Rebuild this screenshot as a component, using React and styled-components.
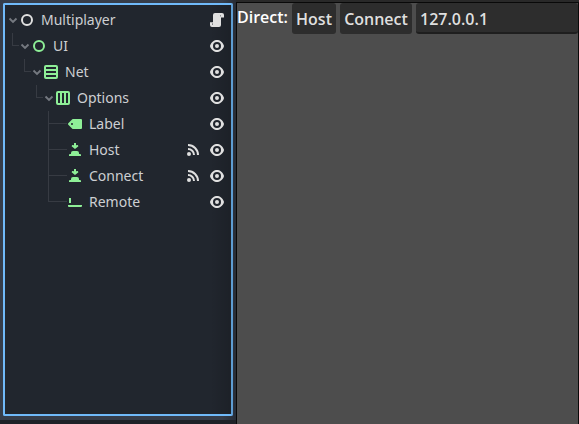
import React from 'react';
import styled, { createGlobalStyle } from 'styled-components';

const GlobalStyle = createGlobalStyle`
  * { box-sizing: border-box; }
  body { margin: 0; overflow: hidden; background: #363d4a; }
`;

const Window = styled.div`
  display: flex;
  width: 579px;
  height: 424px;
  overflow: hidden;
`;

const Dock = styled.aside`
  display: flex;
  flex: none;
  flex-direction: column;
  width: 236px;
  height: 424px;
  padding: 3px 3px 0;
  background: linear-gradient(to right, transparent 222px, rgba(0, 0, 0, 0.28)), #363d4a;
`;

const Tree = styled.div`
  flex: none;
  height: 413px;
  padding: 2px;
  border: 2px solid #70bafa;
  border-right-color: #5e9dd3;
  border-radius: 2px;
  background: linear-gradient(to right, transparent 205px, rgba(0, 0, 0, 0.14)), #21262e;
`;

const DockFooter = styled.div`
  flex: none;
  height: 4px;
  margin: 4px -3px 0;
  background: #1e2127;
`;

const TreeRow = styled.div`
  display: flex;
  align-items: center;
  height: 26px;
  padding-left: ${({ $indent }) => $indent}px;
  padding-right: 4px;
`;

const Branch = styled.div`
  display: grid;
  grid-template-rows: 13px 13px;
  flex: none;
  width: ${({ $wide }) => ($wide ? 19 : 7)}px;
  height: 26px;
  &::before {
    content: '';
    border-left: 1px solid #373b43;
    border-bottom: 1px solid #373b43;
  }
  &::after {
    content: '';
    border-left: 1px solid ${({ $more }) => ($more ? '#373b43' : 'transparent')};
  }
`;

const Arrow = styled.svg`
  flex: none;
  width: 12px;
  height: 12px;
  fill: none;
  stroke: #757980;
  stroke-width: 1.9;
`;

const Icon = styled.svg`
  flex: none;
  width: 16px;
  height: 16px;
  fill: ${({ $color }) => $color || '#e0e0e0'};
`;

const NodeName = styled.span`
  flex: 1;
  margin-left: 6px;
  font: 14px/26px 'Noto Sans', sans-serif;
  color: #cdcfd2;
`;

const RowActions = styled.div`
  display: flex;
  gap: 8px;
`;

const Viewport = styled.main`
  display: grid;
  grid-template-columns: minmax(0, 1fr);
  grid-template-rows: 2px 1px 1fr;
  flex: 1;
  min-width: 0;
  background: #090909;
`;

const ViewportEdge = styled.div`
  background: #292929;
`;

const Canvas = styled.div`
  grid-row: 3;
  margin: 0 1px;
  background: #4d4d4d;
`;

const ControlRow = styled.div`
  display: flex;
  gap: 4px;
  height: 31px;
  font: 600 16px/31px 'Open Sans', sans-serif;
`;

const Caption = styled.span`
  flex: none;
  width: 51px;
  line-height: 29px;
  color: #fff;
  white-space: nowrap;
`;

const Button = styled.button`
  flex: none;
  width: ${({ $width }) => $width}px;
  padding: 2px 0 0;
  border: 0;
  border-radius: 3px;
  background: #2d2d2d;
  color: #dfdfdf;
  font: inherit;
  line-height: 29px;
`;

const AddressInput = styled.input`
  flex: 1;
  min-width: 0;
  height: 31px;
  padding: 2px 4px 0;
  border: 0;
  border-bottom: 2px solid #1e1e1e;
  border-radius: 3px;
  outline: 0;
  background: #2d2d2d;
  color: #dfdfdf;
  font: inherit;
  line-height: 27px;
`;

const shapes = {
  node: 'M8 2a6 6 0 1 0 0 12A6 6 0 0 0 8 2zm0 2a4 4 0 1 1 0 8 4 4 0 0 1 0-8z',
  vbox: 'M3 1a2 2 0 0 0-2 2v10a2 2 0 0 0 2 2h10a2 2 0 0 0 2-2V3a2 2 0 0 0-2-2zm0 2h10v2H3zm0 4h10v2H3zm0 4h10v2H3z',
  hbox: 'M3 1a2 2 0 0 0-2 2v10a2 2 0 0 0 2 2h10a2 2 0 0 0 2-2V3a2 2 0 0 0-2-2zm0 2h2v10H3zm4 0h2v10H7zm4 0h2v10h-2z',
  label: 'M6 3a1 1 0 0 0-.707.293l-4 4a1 1 0 0 0 0 1.414l4 4A1 1 0 0 0 6 13h8a1 1 0 0 0 1-1V4a1 1 0 0 0-1-1zM5 7a1 1 0 0 1 0 2 1 1 0 0 1 0-2z',
  button: 'M7 1v2.2L5.2 2.9 4.6 4.2 8 7l3.4-2.8-.6-1.3L9 3.2V1zM6 9a2 2 0 0 0-2 2v1H3a1 1 0 0 0-1 1v1h12v-1a1 1 0 0 0-1-1h-1v-1a2 2 0 0 0-2-2z',
  lineEdit: 'M2 4v5h2V4zM1 11v1a1 1 0 0 0 1 1h12a1 1 0 0 0 1-1v-1z',
  eye: 'M8 2C5.443 2 2.209 3.948 1.045 7.705a1 1 0 0 0-.01.557C2.163 12.212 5.503 14 8 14s5.837-1.788 6.965-5.738a1 1 0 0 0 0-.55C13.829 3.935 10.557 2 8 2zm0 2a4 4 0 1 1 0 8 4 4 0 0 1 0-8zm0 2a2 2 0 1 0 0 4 2 2 0 0 0 0-4z',
  signal: 'M3 2v2a9 9 0 0 1 9 9h2A11 11 0 0 0 3 2zm0 4v2a5 5 0 0 1 5 5h2a7 7 0 0 0-7-7zm1 4a2 2 0 1 0 0 4 2 2 0 0 0 0-4z',
  script: 'M6 1a2 2 0 0 0-2 2v7.3H1V13a2 2 0 0 0 2 2h7a2 2 0 0 0 2-2V5.5h3V3a2 2 0 0 0-2-2zM3.5 11.3H4V13a.4.4 0 0 1-.5 0zM11.6 4.5V3a.3.3 0 0 1 .4 0v1.5z',
};

const nodes = [
  { name: 'Multiplayer', icon: 'node', indent: 0, open: true, root: true },
  { name: 'UI', icon: 'node', indent: 5, open: true },
  { name: 'Net', icon: 'vbox', indent: 17, open: true },
  { name: 'Options', icon: 'hbox', indent: 29, open: true },
  { name: 'Label', icon: 'label', indent: 41, more: true },
  { name: 'Host', icon: 'button', indent: 41, more: true, signal: true },
  { name: 'Connect', icon: 'button', indent: 41, more: true, signal: true },
  { name: 'Remote', icon: 'lineEdit', indent: 41 },
];

function Glyph({ name, color }) {
  return (
    <Icon viewBox="0 0 16 16" $color={color}>
      <path fillRule="evenodd" d={shapes[name]} />
    </Icon>
  );
}

function TreeNode({ node }) {
  return (
    <TreeRow $indent={node.indent}>
      {!node.root && <Branch $wide={!node.open} $more={node.more} />}
      {node.open && (
        <Arrow viewBox="0 0 12 12">
          <path d="M2.5 4.5 6 8l3.5-3.5" />
        </Arrow>
      )}
      <Glyph name={node.icon} color={node.root ? undefined : '#8eef97'} />
      <NodeName>{node.name}</NodeName>
      <RowActions>
        {node.signal && <Glyph name="signal" />}
        <Glyph name={node.root ? 'script' : 'eye'} />
      </RowActions>
    </TreeRow>
  );
}

export default function App() {
  return (
    <Window>
      <GlobalStyle />
      <Dock>
        <Tree>
          {nodes.map((node) => (
            <TreeNode key={node.name} node={node} />
          ))}
        </Tree>
        <DockFooter />
      </Dock>
      <Viewport>
        <ViewportEdge />
        <Canvas>
          <ControlRow>
            <Caption>Direct:</Caption>
            <Button $width={44}>Host</Button>
            <Button $width={72}>Connect</Button>
            <AddressInput defaultValue="127.0.0.1" />
          </ControlRow>
        </Canvas>
      </Viewport>
    </Window>
  );
}
